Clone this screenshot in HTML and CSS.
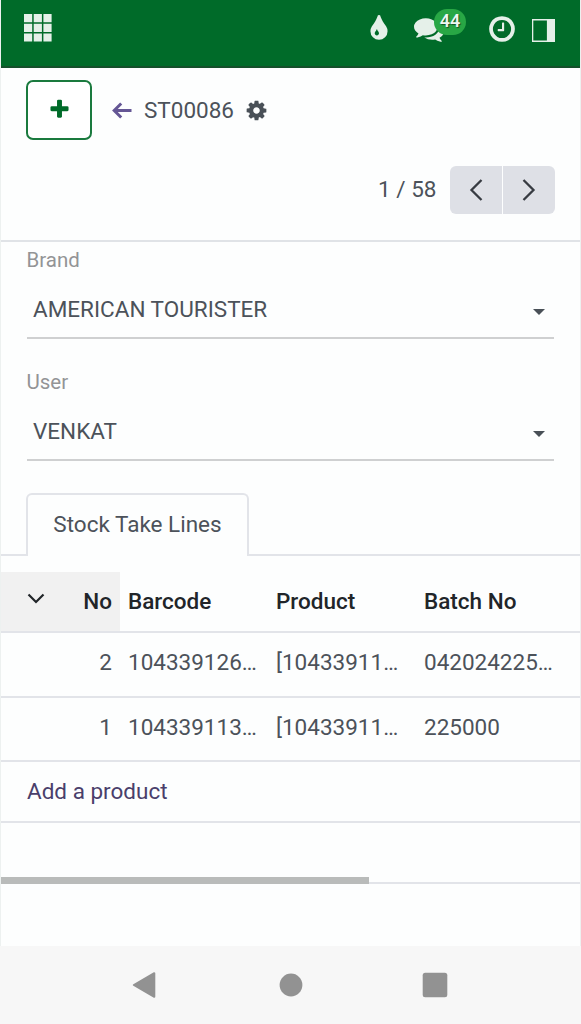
FILE: index.html
```html
<!DOCTYPE html>
<html lang="en">
<head>
    <meta charset="utf-8">
    <title>ST00086</title>
    <meta name="viewport" content="width=device-width, initial-scale=1">
    <link rel="stylesheet" href="styles.css">
</head>
<body>
    <div class="app">
        <!-- Navbar -->
        <header class="navbar">
            <svg class="apps" width="28" height="28" viewBox="0 0 28 28">
                <path d="M0 0h8.2v8.2H0zM9.7 0h8.2v8.2H9.7zM19.4 0h8.2v8.2h-8.2zM0 9.7h8.2v8.2H0zM9.7 9.7h8.2v8.2H9.7zM19.4 9.7h8.2v8.2h-8.2zM0 19.4h8.2v8.2H0zM9.7 19.4h8.2v8.2H9.7zM19.4 19.4h8.2v8.2h-8.2z"/>
            </svg>
            <div class="systray">
                <svg width="30" height="30" viewBox="0 0 1792 1792"><path d="M896 1152q0-36-20-69-1-1-15.500-22.500t-25.500-38-25-44-21-50.500q-4-16-21-16t-21 16q-7 23-21 50.500t-25 44-25.500 38-15.500 22.500q-20 33-20 69 0 53 37.500 90.500t90.500 37.500 90.500-37.500 37.500-90.500zm512-128q0 212-150 362t-362 150-362-150-150-362q0-145 81-275 6-9 62.500-90.500t101-151 99.500-178 83-201.500q9-30 34-47t51-17 51.500 17 33.500 47q28 93 83 201.500t99.500 178 101 151 62.500 90.500q81 127 81 275z"/></svg>
                <div class="messages">
                    <svg width="30" height="30" viewBox="0 0 1792 1792"><path d="M1408 768q0 139-94 257t-256.500 186.500-353.500 68.500q-86 0-176-16-124 88-278 128-36 9-86 16h-3q-11 0-20.500-8t-11.500-21q-1-3-1-6.500t.5-6.500 2-6l2.500-5 3.500-5.500 4-5 4.500-5 4-4.500q5-6 23-25t26-29.500 22.500-29 25-38.500 20.500-44q-124-72-195-177t-71-224q0-139 94-257t256.500-186.500 353.500-68.500 353.500 68.500 256.500 186.500 94 257zm384 256q0 120-71 224.500t-195 176.500q10 24 20.500 44t25 38.500 22.500 29 26 29.500 23 25q1 1 4 4.500t4.500 5 4 5 3.500 5.500l2.500 5 2 6 .5 6.500-1 6.500q-3 14-13 22t-22 7q-50-7-86-16-154-40-278-128-90 16-176 16-271 0-472-132 58 4 88 4 161 0 309-45t264-129q125-92 192-212t67-254q0-77-23-152 129 71 204 178t75 230z"/></svg>
                    <span class="badge">44</span>
                </div>
                <svg class="clock" width="30" height="30" viewBox="0 0 1792 1792"><path d="M1024 544v448q0 14-9 23t-23 9h-320q-14 0-23-9t-9-23v-64q0-14 9-23t23-9h224v-352q0-14 9-23t23-9h64q14 0 23 9t9 23zm416 352q0-148-73-273t-198-198-273-73-273 73-198 198-73 273 73 273 198 198 273 73 273-73 198-198 73-273zm224 0q0 209-103 385.500t-279.500 279.500-385.500 103-385.500-103-279.500-279.500-103-385.500 103-385.500 279.500-279.500 385.500-103 385.500 103 279.500 279.500 103 385.500z"/></svg>
                <svg class="sidebar-icon" width="23" height="23" viewBox="0 0 23 23"><path fill-rule="evenodd" d="M0 0h23v23H0zM1.300 1.600v19.800h13.600V1.600z"/></svg>
            </div>
        </header>

        <!-- Control panel -->
        <div class="control-panel">
            <div class="crumbs">
                <button class="btn-new">
                    <svg width="23" height="23" viewBox="0 0 1792 1792"><path d="M1600 736v192q0 40-28 68t-68 28h-416v416q0 40-28 68t-68 28h-192q-40 0-68-28t-28-68v-416h-416q-40 0-68-28t-28-68v-192q0-40 28-68t68-28h416v-416q0-40 28-68t68-28h192q40 0 68 28t28 68v416h416q40 0 68 28t28 68z"/></svg>
                </button>
                <svg class="back" width="20" height="17" viewBox="0 0 20 17"><path d="M9.200 1.500 2.200 8.500l7 7M2.500 8.500H19.500"/></svg>
                <span class="title">ST00086</span>
                <svg class="cog" width="23" height="23" viewBox="0 0 1792 1792"><path d="M1152 896q0-106-75-181t-181-75-181 75-75 181 75 181 181 75 181-75 75-181zm512-109v222q0 12-8 23t-20 13l-185 28q-19 54-39 91 35 50 107 138 10 12 10 25t-9 23q-27 37-99 108t-94 71q-12 0-26-9l-138-108q-44 23-91 38-16 136-29 186-7 28-36 28h-222q-14 0-24.500-8.500t-11.500-21.500l-28-184q-49-16-90-37l-141 107q-10 9-25 9-14 0-25-11-126-114-165-168-7-10-7-23 0-12 8-23 15-21 51-66.500t54-70.500q-27-50-41-99l-183-27q-13-2-21-12.500t-8-23.500v-222q0-12 8-23t19-13l186-28q14-46 39-92-40-57-107-138-10-12-10-24 0-10 9-23 26-36 98.500-107.500t94.500-71.500q13 0 26 10l138 107q44-23 91-38 16-136 29-186 7-28 36-28h222q14 0 24.500 8.500t11.500 21.500l28 184q49 16 90 37l142-107q9-9 24-9 13 0 25 10 129 119 165 170 7 8 7 22 0 12-8 23-15 21-51 66.500t-54 70.500q26 50 41 98l183 28q13 2 21 12.500t8 23.500z"/></svg>
            </div>
            <div class="pager">
                <span class="counter">1 / 58</span>
                <button class="prev"><svg width="14" height="24" viewBox="0 0 14 24"><path d="M12.500 2 2.500 12l10 10"/></svg></button>
                <button class="next"><svg width="14" height="24" viewBox="0 0 14 24"><path d="M1.500 2l10 10-10 10"/></svg></button>
            </div>
        </div>

        <!-- Form fields -->
        <div class="form">
            <label class="label">Brand</label>
            <div class="field"><span>AMERICAN TOURISTER</span><i class="caret"></i></div>
            <label class="label">User</label>
            <div class="field"><span>VENKAT</span><i class="caret"></i></div>
        </div>

        <div class="tabs">
            <div class="tab">Stock Take Lines</div>
        </div>

        <!-- Lines -->
        <div class="list">
            <table>
                <thead>
                    <tr>
                        <th class="no">
                            <div class="sort">
                                <svg width="18" height="11" viewBox="0 0 18 11"><path d="M1.500 1.500 9 9l7.500-7.500"/></svg>
                                <span>No</span>
                            </div>
                        </th>
                        <th>Barcode</th>
                        <th>Product</th>
                        <th>Batch No</th>
                        <th></th>
                    </tr>
                </thead>
                <tbody>
                    <tr class="line"><td class="no">2</td><td>104339126…</td><td>[10433911…</td><td>042024225…</td><td></td></tr>
                    <tr class="line"><td class="no">1</td><td>104339113…</td><td>[10433911…</td><td>225000</td><td></td></tr>
                    <tr class="add"><td colspan="5"><a>Add a product</a></td></tr>
                    <tr class="blank"><td colspan="5"></td></tr>
                </tbody>
            </table>
            <div class="scrollbar"></div>
        </div>
    </div>

    <!-- Android navigation -->
    <nav class="android">
        <svg width="24" height="28" viewBox="0 0 24 28"><path d="M22.300 2.200v23.600L1.800 14z" stroke="#929292" stroke-width="2" stroke-linejoin="round"/></svg>
        <svg class="home" width="24" height="24" viewBox="0 0 24 24"><circle cx="12" cy="12" r="11.400"/></svg>
        <svg width="26" height="26" viewBox="0 0 26 26"><rect x=".7" y=".7" width="24.600" height="24.600" rx="2.500"/></svg>
    </nav>
</body>
</html>
```

FILE: styles.css
```css
* { margin: 0; padding: 0; box-sizing: border-box; }
body { width: 581px; height: 1024px; overflow: hidden; background: #fdfefe; color: #4c525a; font: 22.5px/30px Roboto, "Liberation Sans", sans-serif; }
button { font: inherit; border: 0; }
svg { display: block; flex: none; overflow: visible; }
.app { height: 946px; border: solid #edf1f0; border-width: 0 1px; }

.navbar { height: 68px; background: #006b29; border-bottom: 2px solid #15502b; padding: 14px 25px 0 23px; display: flex; justify-content: space-between; align-items: flex-start; }
.navbar svg { fill: #e5f0e9; }
.systray { display: flex; }
.messages { position: relative; margin-left: 20px; }
.badge { position: absolute; left: 20px; top: -5px; width: 32px; height: 26px; border-radius: 13px; background: #28a745; color: #f0f7f2; font-size: 18px; font-weight: 500; line-height: 24px; text-align: center; text-shadow: 1px 1px 1px rgba(0, 0, 0, .5); }
.clock { margin-left: 43px; }
.sidebar-icon { margin: 5px 0 0 15px; }

.control-panel { height: 174px; border-bottom: 2px solid #e0e3e7; padding: 12px 25.5px 0 25px; }
.crumbs { display: flex; align-items: center; height: 60px; }
.btn-new { width: 66px; height: 60px; border: 2px solid #1a7a3e; border-radius: 7px; background: #fff; display: flex; align-items: center; justify-content: center; padding-bottom: 2px; }
.btn-new svg { fill: #006b29; }
.back { margin-left: 20px; fill: none; stroke: #655795; stroke-width: 3; }
.title { margin-left: 12px; width: 91px; }
.cog { margin-left: 10px; fill: #495057; }
.pager { display: flex; justify-content: flex-end; align-items: center; margin-top: 26px; height: 48px; }
.counter { margin-right: 13px; padding-bottom: 2px; }
.pager button { width: 52px; height: 48px; background: #dee0e6; display: flex; align-items: center; justify-content: center; }
.pager svg { fill: none; stroke: #373b42; stroke-width: 2.3; }
.prev { border-radius: 6px 0 0 6px; }
.next { border-radius: 0 6px 6px 0; margin-left: 1px; }

.form { padding: 3px 26px 0 25.5px; }
.label { display: block; height: 30px; font-size: 20.5px; color: #939496; }
.field { height: 64px; margin-bottom: 28px; border-bottom: 2px solid #cfd0d1; padding: 19px 9.5px 0 6.5px; display: flex; justify-content: space-between; }
.caret { border: solid transparent; border-width: 6px 6.5px 0; border-top-color: #495057; height: 0; margin-top: 15px; }

.tabs { height: 63px; margin-top: 32px; padding-left: 25px; border-bottom: 2px solid #e2e4e9; }
.tab { width: 223px; height: 63px; border: 2px solid #e2e4e9; border-bottom: 0; border-radius: 6px 6px 0 0; background: #fdfefe; text-align: center; line-height: 58px; }

.list { position: relative; margin-top: 16px; overflow: hidden; height: 312px; }
table { width: 711px; table-layout: fixed; border-collapse: separate; border-spacing: 0; }
th, td { border-bottom: 2px solid #e2e4e9; padding: 0 0 0 8px; text-align: left; white-space: nowrap; width: 148px; }
th { height: 61px; padding-bottom: 2px; font-weight: 500; color: #212529; }
.no { width: 119px; text-align: right; padding: 0 8px 0 26px; }
th.no { background: #f1f1f1; padding-bottom: 2px; }
.sort { display: flex; justify-content: space-between; align-items: center; }
.sort svg { fill: none; stroke: #212529; stroke-width: 2.2; margin-bottom: 4px; }
.line td { height: 64.5px; padding-bottom: 4px; }
.add td { height: 61px; padding: 0 0 1px 26px; color: #4a3f6b; }
.blank td { height: 61px; }
.scrollbar { position: absolute; left: 0; bottom: 0; width: 368px; height: 7px; background: #b9bbba; }

.android { height: 78px; background: #f7f7f7; display: flex; justify-content: space-between; align-items: center; padding: 0 133px 0 132px; }
.android svg { fill: #929292; }
.android .home { margin-left: 3px; }
```
